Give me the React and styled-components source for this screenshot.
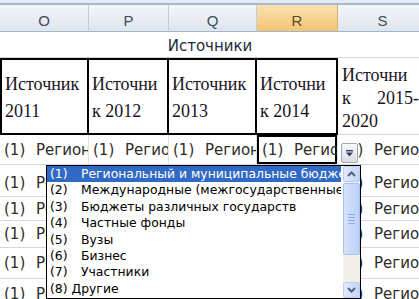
import React from "react";
import styled, { createGlobalStyle } from "styled-components";

const GlobalStyle = createGlobalStyle`
  html, body { margin: 0; padding: 0; background: #fff; }
  body { overflow: hidden; }
  * { box-sizing: border-box; }
`;

const Sheet = styled.div`
  position: relative;
  width: 419px;
  height: 299px;
  overflow: hidden;
  background: #fff;
`;

const FormulaEdge = styled.div`
  height: 5px;
  background: #e3eaf3;
  border-bottom: 2px solid #a6b8cc;
`;

const Grid = styled.div`
  display: grid;
  width: 428px;
  grid-template-columns: 89px 80px 88px 81px 90px;
  grid-template-rows: 27px 26px 77px 30px 32px 24px 27px 31px 30px;
`;

const ColHead = styled.div`
  display: flex;
  align-items: center;
  justify-content: center;
  padding-top: 4px;
  font-family: "Liberation Sans", Arial, sans-serif;
  font-size: 15px;
  color: ${(p) => (p.$active ? "#5d4b24" : "#3d4c5f")};
  background: ${(p) =>
    p.$active
      ? "linear-gradient(#fae0b0, #f3c675)"
      : "linear-gradient(#f3f6f9, #dfe5ec)"};
  border-right: 1px solid ${(p) => (p.$active ? "#e0b060" : "#c2ccd8")};
  border-bottom: 1px solid #9eb6ce;
`;

const Merged = styled.div`
  grid-column: 1 / -1;
  display: flex;
  align-items: center;
  justify-content: center;
  padding: 3px 8px 0 0;
  font-family: "DejaVu Sans", Tahoma, sans-serif;
  font-size: 15px;
  color: #1d2c38;
  border-bottom: 1px solid #d4d8de;
`;

const TitleCell = styled.div`
  font-family: "Liberation Serif", "Times New Roman", serif;
  font-size: 18px;
  line-height: ${(p) => (p.$loose ? "23px" : "27px")};
  color: #1b1322;
  padding: ${(p) => (p.$loose ? "6px 0 0 4px" : "11px 0 0 3px")};
  white-space: nowrap;
  overflow: hidden;
  border-top: ${(p) => (p.$thick ? "2px solid #000" : "none")};
  border-bottom: ${(p) => (p.$thick ? "2px solid #000" : "1px solid #d4d8de")};
  border-right: ${(p) => (p.$thick ? "2px solid #000" : "1px solid #d4d8de")};
  border-left: ${(p) => (p.$first ? "2px solid #000" : "none")};
`;

const Spread = styled.div`
  display: flex;
  justify-content: space-between;
  width: 77px;
`;

const DataCell = styled.div`
  display: flex;
  align-items: center;
  padding-left: ${(p) => (p.$selected ? "5px" : "4px")};
  padding-top: ${(p) => (p.$low ? "4px" : "0")};
  white-space: nowrap;
  overflow: hidden;
  font-family: "DejaVu Sans", Tahoma, sans-serif;
  font-size: 15px;
  color: #2e2d28;
  border-right: 1px solid #dfe2e6;
  border-bottom: 1px solid #d4d8de;
  box-shadow: ${(p) => (p.$selected ? "inset 0 0 0 2px #000" : "none")};
`;

const Num = styled.span`
  display: inline-block;
  flex: none;
  width: ${(p) => p.$w || 32}px;
`;

const DropButton = styled.div`
  position: absolute;
  left: 341px;
  top: 143px;
  width: 17px;
  height: 20px;
  display: flex;
  align-items: center;
  justify-content: center;
  border: 1px solid #a3a7ad;
  border-radius: 2px;
  background: linear-gradient(#f7f8fa, #d9dde3);
`;

const List = styled.div`
  position: absolute;
  left: 46px;
  top: 165px;
  width: 315px;
  height: 134px;
  border: 1px solid #000;
  background: #fff;
  display: flex;
`;

const Items = styled.div`
  flex: 1;
  overflow: hidden;
  padding-right: 2px;
`;

const Item = styled.div`
  display: flex;
  height: 16.4px;
  line-height: 16.4px;
  padding-left: 3px;
  white-space: nowrap;
  overflow: hidden;
  font-family: "DejaVu Sans", Tahoma, sans-serif;
  font-size: 12.4px;
  color: ${(p) => (p.$active ? "#fff" : "#000")};
  background: ${(p) => (p.$active ? "#316ac5" : "transparent")};
`;

const Scrollbar = styled.div`
  width: 17px;
  display: flex;
  flex-direction: column;
  background: #f1f0ea;
`;

const ScrollButton = styled.div`
  height: 16px;
  display: flex;
  align-items: center;
  justify-content: center;
  border: 1px solid #bccdf3;
  border-radius: 2px;
  background: linear-gradient(90deg, #e2ebfd, #c4d5f9);
`;

const Thumb = styled.div`
  height: 72px;
  margin-top: 1px;
  display: flex;
  flex-direction: column;
  align-items: center;
  justify-content: center;
  gap: 2px;
  border: 1px solid #aac0f0;
  border-radius: 2px;
  background: linear-gradient(90deg, #d6e3fd, #bcd0f9);
`;

const Grip = styled.span`
  width: 7px;
  height: 1px;
  background: #eef3fe;
  border-bottom: 1px solid #8fa9e2;
`;

const Track = styled.div`
  flex: 1;
`;

const Chevron = ({ up }) => (
  <svg width="9" height="6" viewBox="0 0 9 6">
    <path
      d={up ? "M1 5 L4.5 1.5 L8 5" : "M1 1 L4.5 4.5 L8 1"}
      fill="none"
      stroke="#4d6185"
      strokeWidth="2"
    />
  </svg>
);

const label = "Региональный и муниципальные бюджеты";
const rows = [4, 5, 6, 7, 8];

const options = [
  "Региональный и муниципальные бюджеты",
  "Международные (межгосударственные) фонды",
  "Бюджеты различных государств",
  "Частные фонды",
  "Вузы",
  "Бизнес",
  "Участники",
];

const Data = ({ selected, low }) => (
  <DataCell $selected={selected} $low={low}>
    <Num>(1)</Num>
    <span>{label}</span>
  </DataCell>
);

export default function App() {
  return (
    <Sheet>
      <GlobalStyle />
      <FormulaEdge />
      <Grid>
        <ColHead>O</ColHead>
        <ColHead>P</ColHead>
        <ColHead>Q</ColHead>
        <ColHead $active>R</ColHead>
        <ColHead>S</ColHead>

        <Merged>Источники</Merged>

        <TitleCell $thick $first>
          Источник
          <br />
          2011
        </TitleCell>
        <TitleCell $thick>
          Источни
          <br />к 2012
        </TitleCell>
        <TitleCell $thick>
          Источник
          <br />
          2013
        </TitleCell>
        <TitleCell $thick>
          Источни
          <br />к 2014
        </TitleCell>
        <TitleCell $loose>
          Источни
          <Spread>
            <span>к</span>
            <span>2015-</span>
          </Spread>
          2020
        </TitleCell>

        <Data />
        <Data />
        <Data />
        <Data selected />
        <Data />

        {rows.map((r) => (
          <React.Fragment key={r}>
            <Data low={r === 4} />
            <Data low={r === 4} />
            <Data low={r === 4} />
            <Data low={r === 4} />
            <Data low={r === 4} />
          </React.Fragment>
        ))}
      </Grid>

      <DropButton>
        <svg width="9" height="7" viewBox="0 0 9 7">
          <rect x="1" y="0" width="7" height="1.4" fill="#2f3d62" />
          <path d="M1 2.5 L8 2.5 L4.5 6.5 Z" fill="#2f3d62" />
        </svg>
      </DropButton>

      <List>
        <Items>
          {options.map((o, i) => (
            <Item key={o} $active={i === 0}>
              <Num $w={31}>({i + 1})</Num>
              <span>{o}</span>
            </Item>
          ))}
          <Item>(8) Другие</Item>
        </Items>
        <Scrollbar>
          <ScrollButton>
            <Chevron up />
          </ScrollButton>
          <Thumb>
            <Grip />
            <Grip />
            <Grip />
            <Grip />
          </Thumb>
          <Track />
          <ScrollButton>
            <Chevron />
          </ScrollButton>
        </Scrollbar>
      </List>
    </Sheet>
  );
}
